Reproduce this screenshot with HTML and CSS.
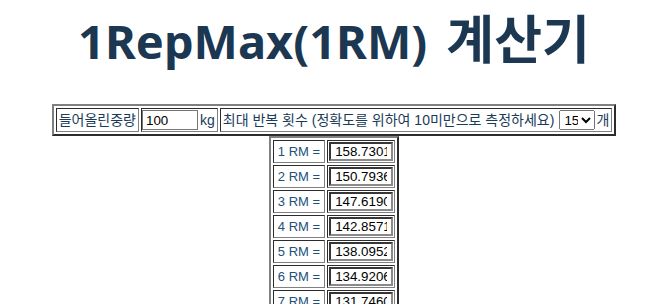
FILE: index.html
```html
<!DOCTYPE html>
<html lang="ko">
<head>
<meta charset="utf-8">
<title>1RepMax(1RM) 계산기</title>
<link rel="stylesheet" href="styles.css">
</head>
<body>
<h1 class="title">1RepMax(1RM) <span class="title-ko">계산기</span></h1>
<table class="form-table">
  <tr>
    <td class="cell"><div class="cell-row">들어올린중량</div></td>
    <td class="cell cell-weight"><div class="cell-row"><input class="weight-input" type="text" value="100">kg</div></td>
    <td class="cell"><div class="cell-row">최대 반복 횟수 (정확도를 위하여 10미만으로 측정하세요)<select class="reps-select"><option>15</option></select>개</div></td>
  </tr>
</table>
<table class="result-table">
  <tr><td class="cell label">1 RM =</td><td class="cell value"><input class="result-input" type="text" value="158.7301587301587" readonly></td></tr>
  <tr><td class="cell label">2 RM =</td><td class="cell value"><input class="result-input" type="text" value="150.79365079365078" readonly></td></tr>
  <tr><td class="cell label">3 RM =</td><td class="cell value"><input class="result-input" type="text" value="147.6190476190476" readonly></td></tr>
  <tr><td class="cell label">4 RM =</td><td class="cell value"><input class="result-input" type="text" value="142.85714285714286" readonly></td></tr>
  <tr><td class="cell label">5 RM =</td><td class="cell value"><input class="result-input" type="text" value="138.0952380952381" readonly></td></tr>
  <tr><td class="cell label">6 RM =</td><td class="cell value"><input class="result-input" type="text" value="134.92063492063494" readonly></td></tr>
  <tr><td class="cell label">7 RM =</td><td class="cell value"><input class="result-input" type="text" value="131.74603174603175" readonly></td></tr>
  <tr><td class="cell label">8 RM =</td><td class="cell value"><input class="result-input" type="text" value="126.98412698412699" readonly></td></tr>
  <tr><td class="cell label">9 RM =</td><td class="cell value"><input class="result-input" type="text" value="122.22222222222223" readonly></td></tr>
</table>
</body>
</html>
```
FILE: styles.css
```css
body {
  margin: 8px;
  background: #ffffff;
  color: #1b3b58;
  font-family: "Liberation Sans", "Noto Sans CJK KR", sans-serif;
  font-size: 14px;
}

.title {
  font-family: "Noto Sans", "Noto Sans CJK KR", sans-serif;
  font-weight: 700;
  font-size: 47px;
  line-height: 62px;
  text-align: center;
  margin: 0 0 32px;
  color: #1b3752;
}

.title-ko {
  font-size: 52px;
  margin-left: 7px;
}

.form-table,
.result-table {
  margin: 0 auto;
  border: 2px outset #808080;
  border-spacing: 2px;
}

.cell {
  border: 1px inset #808080;
  padding: 1px 2px;
  white-space: nowrap;
}

.cell-row {
  display: flex;
  align-items: center;
  height: 20px;
  line-height: 20px;
}

.cell-weight {
  padding-left: 0;
}

.weight-input {
  box-sizing: border-box;
  width: 56px;
  height: 20px;
  padding: 1px 3px;
  margin: 0 2px 0 0;
  border: 1px solid #767676;
  font-family: "Liberation Sans", sans-serif;
  font-size: 13.333px;
  color: #000;
}

.reps-select {
  box-sizing: border-box;
  width: 36px;
  height: 20px;
  margin: 0 1px 0 5px;
  font-family: "Liberation Sans", sans-serif;
  font-size: 13.333px;
  color: #000;
}

.result-table .cell {
  height: 19px;
  line-height: 17px;
}

.label {
  padding: 1px 4px;
  font-size: 13px;
  color: #23507a;
}

.value {
  padding: 1px;
}

.result-input {
  box-sizing: border-box;
  display: block;
  width: 64px;
  height: 19px;
  padding: 0 4px;
  margin: 0;
  border: 2px inset #8a8a8a;
  font-family: "Liberation Sans", sans-serif;
  font-size: 13.333px;
  color: #000;
}
```
